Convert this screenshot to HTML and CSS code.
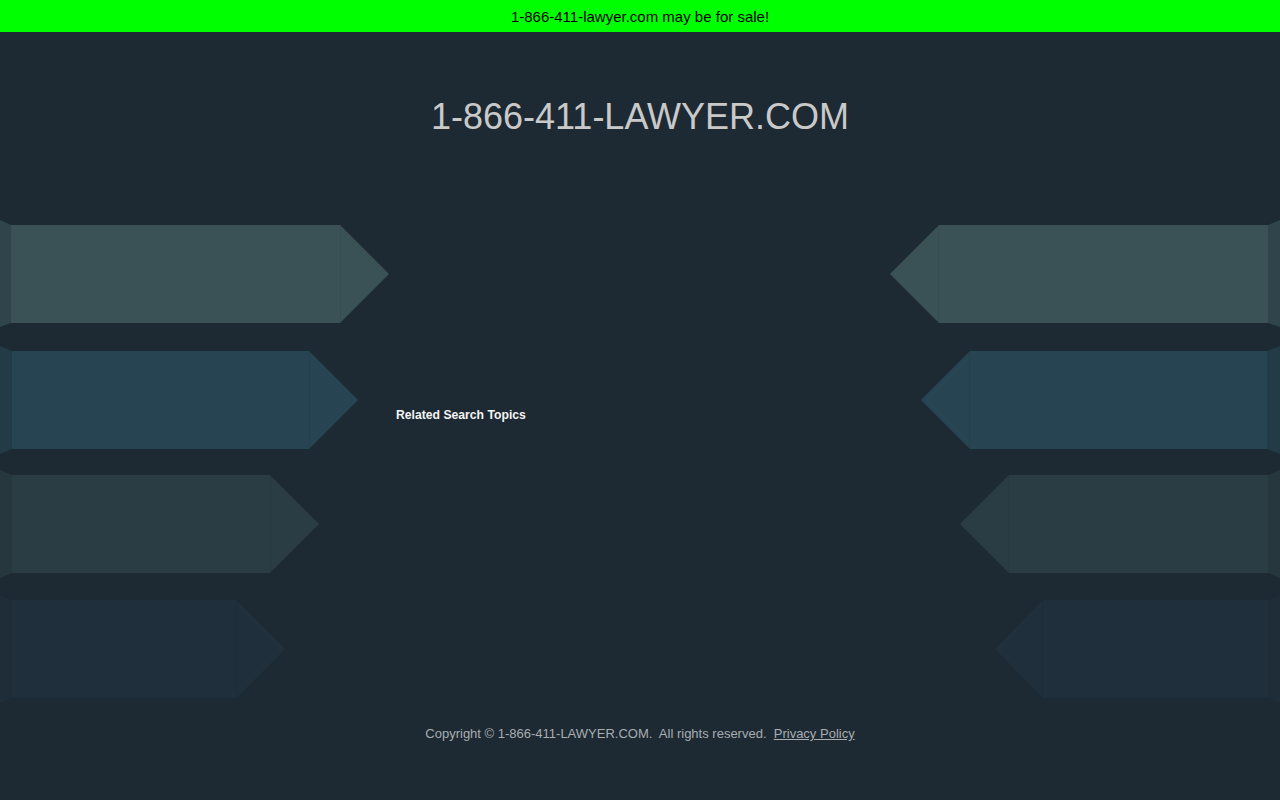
FILE: index.html
```
<!DOCTYPE html>
<html lang="en">
<head>
<meta charset="utf-8">
<title>1-866-411-lawyer.com</title>
<link rel="stylesheet" href="styles.css">
</head>
<body>
<div class="sale-bar">1-866-411-lawyer.com may be for sale!</div>
<header class="title">1-866-411-LAWYER.COM</header>
<main class="stage">
  <svg class="arrows" width="390" height="490" viewBox="0 0 390 490" aria-hidden="true">
    <polygon class="f1" points="0,2 11,7 11,105 0,109"/>
    <polygon class="b1" points="11,7 340,7 389,56 340,105 11,105"/>
    <line class="seam" x1="340.5" y1="7" x2="340.5" y2="105"/>
    <polygon class="f2" points="0,128 12,133 12,231 0,236"/>
    <polygon class="b2" points="12,133 309,133 358,182 309,231 12,231"/>
    <line class="seam" x1="309.5" y1="133" x2="309.5" y2="231"/>
    <polygon class="f3" points="0,252 12,257 12,355 0,360"/>
    <polygon class="b3" points="12,257 270,257 319,306 270,355 12,355"/>
    <line class="seam" x1="270.5" y1="257" x2="270.5" y2="355"/>
    <polygon class="f4" points="0,377 12,382 12,480 0,485"/>
    <polygon class="b4" points="12,382 236,382 285,431 236,480 12,480"/>
    <line class="seam" x1="236.5" y1="382" x2="236.5" y2="480"/>
  </svg>
  <div class="center">
    <h2 class="related">Related Search Topics</h2>
  </div>
  <svg class="arrows mirror" width="390" height="490" viewBox="0 0 390 490" aria-hidden="true">
    <polygon class="f1" points="0,2 12,7 12,105 0,109"/>
    <polygon class="b1" points="12,7 341,7 390,56 341,105 12,105"/>
    <line class="seam" x1="341.5" y1="7" x2="341.5" y2="105"/>
    <polygon class="f2" points="0,128 13,133 13,231 0,236"/>
    <polygon class="b2" points="13,133 310,133 359,182 310,231 13,231"/>
    <line class="seam" x1="310.5" y1="133" x2="310.5" y2="231"/>
    <polygon class="f3" points="0,252 12,257 12,355 0,360"/>
    <polygon class="b3" points="12,257 271,257 320,306 271,355 12,355"/>
    <line class="seam" x1="271.5" y1="257" x2="271.5" y2="355"/>
    <polygon class="f4" points="0,377 12,382 12,480 0,485"/>
    <polygon class="b4" points="12,382 237,382 285,431 237,480 12,480"/>
    <line class="seam" x1="237.5" y1="382" x2="237.5" y2="480"/>
  </svg>
</main>
<footer class="footer">
  Copyright © 1-866-411-LAWYER.COM.&nbsp; All rights reserved.&nbsp; <a href="#" class="privacy">Privacy Policy</a>
</footer>
</body>
</html>
```
FILE: styles.css
```
html, body {
  margin: 0;
  padding: 0;
}
body {
  background: #1e2a33;
  font-family: "Liberation Sans", Arial, sans-serif;
  width: 1280px;
  height: 800px;
  overflow: hidden;
}
.sale-bar {
  height: 32px;
  line-height: 34px;
  background: #00ff00;
  color: #000;
  font-size: 15px;
  text-align: center;
}
.title {
  margin: 64px 0 0;
  height: 42px;
  line-height: 42px;
  font-size: 36px;
  color: #c9c9c9;
  text-align: center;
}
.stage {
  margin-top: 80px;
  height: 490px;
  display: flex;
  justify-content: space-between;
}
.arrows {
  display: block;
  flex: none;
}
.mirror {
  transform: scaleX(-1);
}
.center {
  flex: 1;
  padding-left: 6px;
  padding-top: 189px;
}
.related {
  margin: 0;
  font-size: 12.2px;
  line-height: 16px;
  font-weight: bold;
  color: #f4f4f4;
}
.f1 { fill: #2f454b; }
.b1 { fill: #3a5256; }
.f2 { fill: #223b47; }
.b2 { fill: #264452; }
.f3 { fill: #27373e; }
.b3 { fill: #2b3d44; }
.f4 { fill: #1f2d38; }
.b4 { fill: #1f303c; }
.seam {
  stroke: rgba(0, 0, 0, 0.05);
  stroke-width: 1;
}
.footer {
  margin-top: 18px;
  line-height: 16px;
  font-size: 13px;
  color: #a7adb1;
  text-align: center;
}
.privacy {
  color: #a7adb1;
  text-decoration: underline;
}
```
